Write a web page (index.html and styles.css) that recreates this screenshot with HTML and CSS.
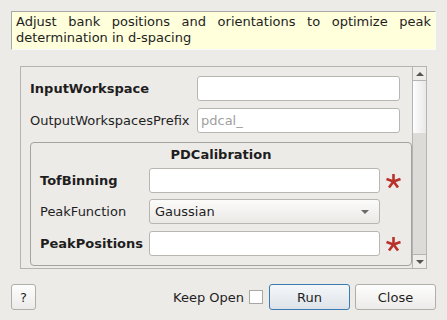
FILE: index.html
```html
<!DOCTYPE html>
<html lang="en">
<head>
    <meta charset="UTF-8">
    <link rel="stylesheet" href="styles.css">
    <title>PDCalibration</title>
</head>
<body>
<div class="dialog">
    <div class="desc">Adjust bank positions and orientations to optimize peak determination in d-spacing</div>

    <div class="scroll">
        <div class="props">
            <div class="row top">
                <span class="label bold">InputWorkspace</span>
                <div class="field"></div>
            </div>
            <div class="row top">
                <span class="label">OutputWorkspacesPrefix</span>
                <div class="field"><span class="placeholder">pdcal_</span></div>
            </div>

            <div class="group">
                <div class="group-title">PDCalibration</div>
                <div class="row inner">
                    <span class="label bold">TofBinning</span>
                    <div class="field"></div>
                    <svg class="star" viewBox="0 0 15 14"><g stroke="#b8312a" stroke-width="2.6"><line x1="7.5" y1="7.5" x2="7.5" y2="0"/><line x1="7.5" y1="7.5" x2="0.5" y2="5"/><line x1="7.5" y1="7.5" x2="14.5" y2="5"/><line x1="7.5" y1="7.5" x2="3" y2="13.5"/><line x1="7.5" y1="7.5" x2="12" y2="13.5"/></g></svg>
                </div>
                <div class="row inner">
                    <span class="label">PeakFunction</span>
                    <div class="combo"><span>Gaussian</span><i class="down"></i></div>
                </div>
                <div class="row inner">
                    <span class="label bold">PeakPositions</span>
                    <div class="field"></div>
                    <svg class="star" viewBox="0 0 15 14"><g stroke="#b8312a" stroke-width="2.6"><line x1="7.5" y1="7.5" x2="7.5" y2="0"/><line x1="7.5" y1="7.5" x2="0.5" y2="5"/><line x1="7.5" y1="7.5" x2="14.5" y2="5"/><line x1="7.5" y1="7.5" x2="3" y2="13.5"/><line x1="7.5" y1="7.5" x2="12" y2="13.5"/></g></svg>
                </div>
            </div>
        </div>

        <div class="vbar">
            <div class="vbtn"><i class="up"></i></div>
            <div class="thumb"></div>
            <div class="track"></div>
            <div class="vbtn"><i class="down"></i></div>
        </div>
    </div>

    <div class="buttons">
        <div class="btn help">?</div>
        <div class="spacer"></div>
        <span class="keep">Keep Open</span>
        <div class="check"></div>
        <div class="btn run">Run</div>
        <div class="btn">Close</div>
    </div>
</div>
</body>
</html>
```

FILE: styles.css
```css
body {
    margin: 0;
    background: #edebe8;
    font-family: "DejaVu Sans", sans-serif;
    font-size: 13px;
    color: #1e1e1e;
}

.dialog {
    padding: 11px 11px 0;
}

.desc {
    height: 39px;
    box-sizing: border-box;
    border: 1px solid;
    border-color: #a8a8a8 #fafafa #fafafa #a8a8a8;
    background: #ffffdc;
    padding: 2px 4px;
    line-height: 16px;
    text-align: justify;
}

.scroll {
    display: flex;
    width: 407px;
    height: 203px;
    box-sizing: border-box;
    margin: 16px 0 0 9px;
    border: 1px solid #b4b4b4;
}

.props {
    flex: 1;
    overflow: hidden;
    padding: 9px 0 0 9px;
}

.row {
    display: flex;
    align-items: center;
    height: 25px;
}

.row.top + .row.top {
    margin-top: 7px;
}

.row.top .label {
    width: 167px;
}

.label.bold {
    font-weight: bold;
}

.field {
    box-sizing: border-box;
    height: 25px;
    width: 203px;
    background: #fff;
    border: 1px solid #b9b6b2;
    border-radius: 3px;
    padding: 0 3px;
    display: flex;
    align-items: center;
}

.placeholder {
    color: #a0a0a0;
}

.group {
    margin-top: 9px;
    height: 124px;
    box-sizing: border-box;
    border: 1px solid #a4a29f;
    border-radius: 4px;
    padding: 0 0 0 9px;
}

.group-title {
    font-weight: bold;
    text-align: center;
    line-height: 16px;
    padding: 4px 0 0 0;
    margin-left: -9px;
}

.row.inner {
    margin-top: 5px;
}

.row.inner:nth-child(3) {
    margin-top: 6px;
}

.row.inner:nth-child(4) {
    margin-top: 7px;
}

.row.inner .label {
    width: 109px;
}

.row.inner .field {
    width: 231px;
}

.star {
    width: 15px;
    height: 14px;
    margin-left: 6px;
}

.combo {
    box-sizing: border-box;
    height: 25px;
    width: 231px;
    border: 1px solid #b9b6b2;
    border-radius: 3px;
    background: linear-gradient(#fbfbfa, #ebe9e6);
    padding: 0 5px;
    display: flex;
    align-items: center;
    justify-content: space-between;
}

.down, .up {
    display: block;
    width: 0;
    height: 0;
    border-left: 4px solid transparent;
    border-right: 4px solid transparent;
}

.down {
    border-top: 4px solid #555;
}

.up {
    border-bottom: 4px solid #555;
}

.combo .down {
    margin-right: 5px;
    border-top-color: #6a6a6a;
}

.vbar {
    width: 13px;
    border-left: 1px solid #b4b4b4;
    display: flex;
    flex-direction: column;
}

.vbtn {
    height: 13px;
    display: flex;
    align-items: center;
    justify-content: center;
    background: #efedea;
}

.vbtn:first-child {
    border-bottom: 1px solid #b4b4b4;
}

.vbtn:last-child {
    border-top: 1px solid #b4b4b4;
}

.thumb {
    height: 52px;
    background: linear-gradient(90deg, #fdfdfd, #e9e9e9);
}

.track {
    flex: 1;
    background: #dddbd8;
}

.buttons {
    display: flex;
    align-items: center;
    margin-top: 15px;
}

.btn {
    box-sizing: border-box;
    height: 26px;
    width: 81px;
    border: 1px solid #b1aeaa;
    border-radius: 3px;
    background: linear-gradient(#fdfdfd, #ecebe9);
    display: flex;
    align-items: center;
    justify-content: center;
}

.btn.help {
    width: 25px;
}

.spacer {
    flex: 1;
}

.keep {
    margin-right: 5px;
}

.check {
    width: 14px;
    height: 14px;
    box-sizing: border-box;
    background: #fff;
    border: 1px solid #aaa7a3;
    margin-right: 6px;
}

.btn.run {
    border-color: #3b7bb3;
    background: linear-gradient(#f5f7f9, #dde3e9);
    margin-right: 5px;
}
```
